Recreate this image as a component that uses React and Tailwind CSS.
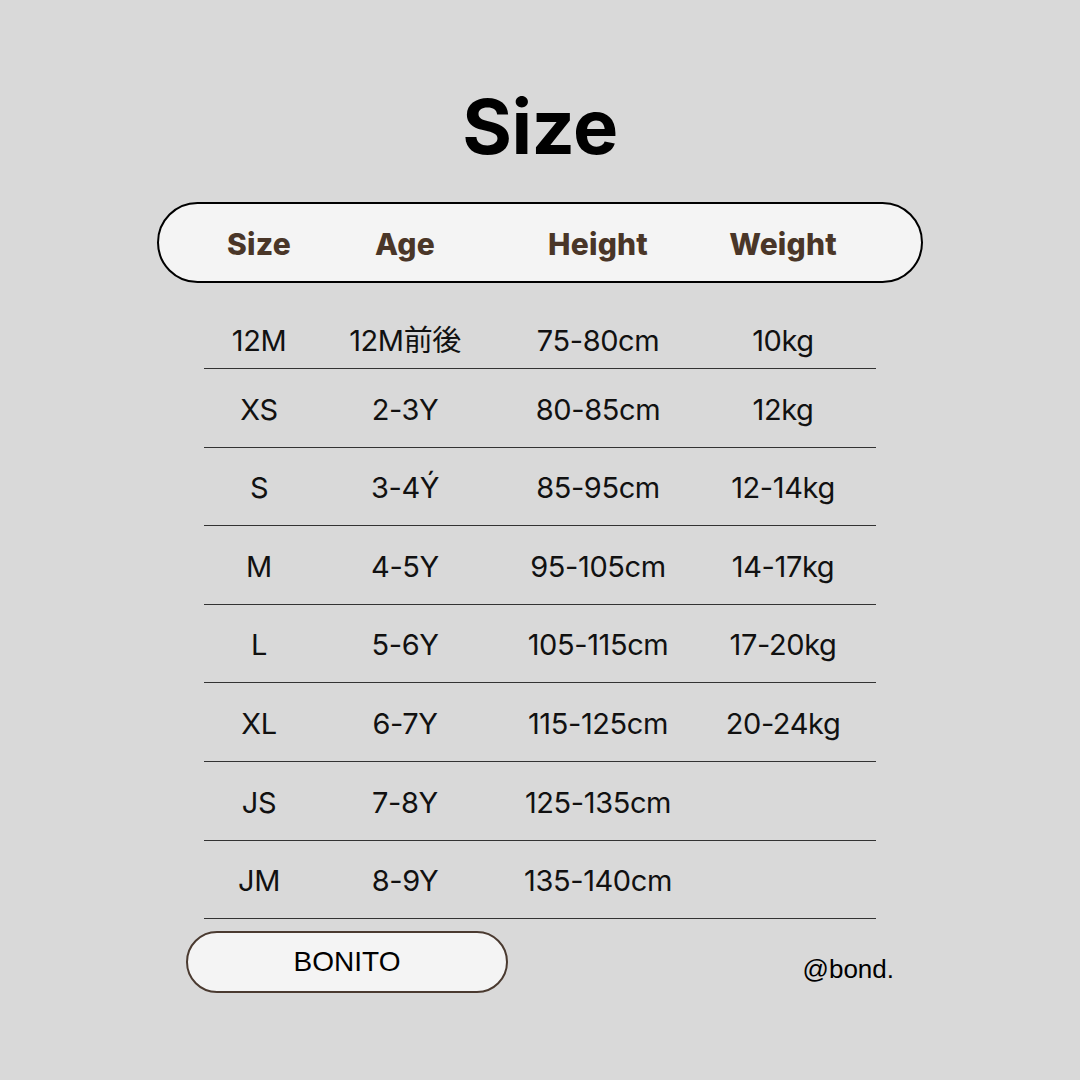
const rows = [
  ["12M", "12M前後", "75-80cm", "10kg"],
  ["XS", "2-3Y", "80-85cm", "12kg"],
  ["S", "3-4Ý", "85-95cm", "12-14kg"],
  ["M", "4-5Y", "95-105cm", "14-17kg"],
  ["L", "5-6Y", "105-115cm", "17-20kg"],
  ["XL", "6-7Y", "115-125cm", "20-24kg"],
  ["JS", "7-8Y", "125-135cm", ""],
  ["JM", "8-9Y", "135-140cm", ""],
];

const cols = "grid grid-cols-[110px_182px_204px_166px] items-center text-center";

export default function App() {
  return (
    <div className="w-[1080px] h-[1080px] bg-[#d9d9d9] font-['Inter','Noto_Sans_CJK_JP',sans-serif] flex flex-col items-center pt-[88px]">
      {/* Title */}
      <h1 className="text-[76px] font-bold leading-none text-black tracking-[-0.5px]">Size</h1>

      {/* Header pill */}
      <div className="mt-[38px] w-[766px] h-[81px] rounded-full border-2 border-black bg-[#f4f4f4] pl-[45px] pt-[4px] flex items-center">
        <div className={`${cols} text-[30px] font-extrabold text-[#4a3628] tracking-[0.2px]`}>
          <span>Size</span>
          <span>Age</span>
          <span>Height</span>
          <span>Weight</span>
        </div>
      </div>

      {/* Rows */}
      <div className="mt-[27px] w-[672px] flex flex-col">
        {rows.map((r, i) => (
          <div
            key={r[0]}
            className={`${cols} border-b border-[#333] text-[29px] text-[#111] tracking-[-0.4px] ${i === 0 ? "h-[59px] pt-[3px]" : "h-[78.6px] pt-[3px]"}`}
          >
            {r.map((c, j) => (
              <span key={j}>{c}</span>
            ))}
          </div>
        ))}
      </div>

      {/* Footer */}
      <div className="mt-[12px] w-[708px] flex items-center justify-between">
        <div className="w-[322px] h-[62px] rounded-full border-2 border-[#4a3a30] bg-[#f4f4f4] flex items-center justify-center text-[28px] text-black font-['Liberation_Sans',sans-serif]">
          BONITO
        </div>
        <span className="mt-[14px] text-[26px] text-black font-['Liberation_Sans',sans-serif]">@bond.</span>
      </div>
    </div>
  );
}
